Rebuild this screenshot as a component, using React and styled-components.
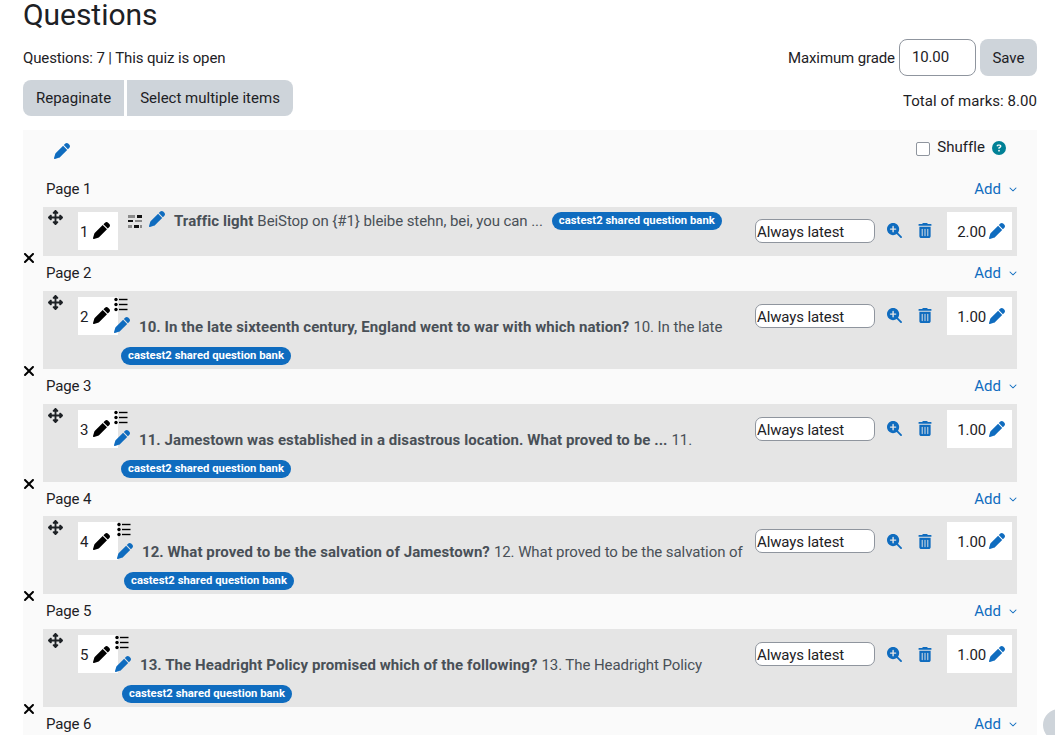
import React from 'react';
import styled, { createGlobalStyle } from 'styled-components';
import {
  FaPen,
  FaUpDownLeftRight,
  FaXmark,
  FaMagnifyingGlassPlus,
  FaTrashCan,
  FaChevronDown,
  FaCircleQuestion,
} from 'react-icons/fa6';

const GlobalStyle = createGlobalStyle`
  html, body {
    margin: 0;
    height: 735px;
    overflow: hidden;
    background: #fff;
    font-family: Roboto, 'Noto Sans', sans-serif;
    font-size: 15px;
    letter-spacing: -0.12px;
    color: #1d2125;
  }
`;

const Page = styled.div`
  padding: 0 18px 0 23px;
  height: 735px;
  overflow: hidden;
  box-sizing: border-box;
`;

const Heading = styled.h2`
  margin: 0;
  height: 39px;
  font-size: 30px;
  font-weight: 400;
  letter-spacing: -0.05px;
  line-height: 29px;
`;

const TopBar = styled.div`
  display: flex;
  justify-content: space-between;
  height: 77px;
`;

const Column = styled.div`
  display: flex;
  flex-direction: column;
  align-items: ${(p) => (p.$right ? 'flex-end' : 'flex-start')};
`;

const Stats = styled.div`
  height: 41px;
  line-height: 38px;
`;

const ButtonGroup = styled.div`
  display: flex;
  gap: 3px;
`;

const Button = styled.button`
  height: ${(p) => (p.$tall ? 37 : 36)}px;
  padding: 0 ${(p) => (p.$tall ? 12.5 : 13)}px;
  border: 0;
  border-radius: ${(p) => p.$radius || '8px'};
  background: #ced4da;
  color: #1d2125;
  font: inherit;
  letter-spacing: 0;
`;

const GradeForm = styled.div`
  display: flex;
  align-items: center;
  gap: 4px;
`;

const GradeInput = styled.div`
  width: 77px;
  height: 37px;
  box-sizing: border-box;
  padding-left: 12px;
  border: 1px solid #8f959e;
  border-radius: 8px;
  line-height: 35px;
`;

const Total = styled.div`
  margin-top: 14px;
  letter-spacing: 0.05px;
  line-height: 23px;
`;

const Panel = styled.div`
  margin-top: 14px;
  padding: 0 20px;
  background: #fafafa;
`;

const PanelHead = styled.div`
  display: flex;
  justify-content: space-between;
  height: 42px;
  padding: 0 11px;
`;

const HeadPen = styled.span`
  margin-top: 13px;
  color: #0f6cbf;
  font-size: 16px;
  line-height: 16px;
`;

const Shuffle = styled.label`
  display: flex;
  align-items: center;
  height: 34px;
  gap: 7px;
  letter-spacing: 0.05px;
`;

const Checkbox = styled.span`
  width: 14px;
  height: 14px;
  margin-top: 4px;
  background: #fff;
  border: 1px solid #8f959e;
  border-radius: 2px;
  box-sizing: border-box;
`;

const HelpIcon = styled.span`
  margin-top: 4px;
  color: #008196;
  font-size: 14px;
  line-height: 14px;
`;

const PageHead = styled.div`
  display: flex;
  align-items: center;
  justify-content: space-between;
  height: 34.7px;
  padding: 0 0 1px 3px;
  box-sizing: border-box;
`;

const AddLink = styled.span`
  display: flex;
  align-items: center;
  gap: 8px;
  color: #0f6cbf;
  letter-spacing: 0.05px;
  svg {
    font-size: 8px;
  }
`;

const Row = styled.div`
  position: relative;
  display: flex;
  height: ${(p) => (p.$single ? 49.6 : 78)}px;
  background: #e5e5e5;
  padding: ${(p) => (p.$single ? 5 : 6)}px 5px 0;
  box-sizing: border-box;
`;

const RemoveIcon = styled.span`
  position: absolute;
  left: -22px;
  bottom: -9px;
  display: flex;
  font-size: 16px;
  line-height: 14px;
  height: 14px;
  align-items: center;
  color: #000;
`;

const MoveIcon = styled.span`
  flex: none;
  width: 30px;
  margin-top: -2px;
  color: #1d2125;
  font-size: 15px;
  line-height: 15px;
`;

const NumberBox = styled.div`
  flex: none;
  display: flex;
  align-items: center;
  gap: 5px;
  width: 40px;
  height: 38px;
  padding-left: 2px;
  box-sizing: border-box;
  background: #fff;
  svg {
    color: #000;
    font-size: 17px;
  }
`;

const BoxValue = styled.span`
  margin-top: 2px;
`;

const Content = styled.div`
  flex: 1;
  min-width: 0;
  margin-left: ${(p) => p.$shift}px;
  color: #495057;
  letter-spacing: -0.08px;
`;

const TypeIcon = styled.span`
  display: block;
  height: 15px;
`;

const QuestionLine = styled.div`
  display: flex;
  align-items: center;
  height: 26px;
  margin-top: 2px;
  white-space: nowrap;
`;

const SingleLine = styled.div`
  display: flex;
  align-items: center;
  height: 18px;
  margin-left: 10px;
  white-space: nowrap;
  svg {
    flex: none;
  }
`;

const EditPen = styled.span`
  flex: none;
  margin: ${(p) => (p.$single ? '0 9px 0 7px' : '0 9px 0 0')};
  color: #0f6cbf;
  font-size: 16px;
  line-height: 16px;
`;

const Title = styled.strong`
  font-weight: 700;
  letter-spacing: 0.08px;
  margin-right: 4px;
`;

const Badge = styled.span`
  display: inline-block;
  flex: none;
  height: 18px;
  margin-left: ${(p) => p.$gap || 0}px;
  padding: 0 7px;
  border-radius: 9px;
  background: #0f6cbf;
  color: #fff;
  font-size: 11.25px;
  font-weight: 700;
  letter-spacing: 0.03px;
  line-height: 18px;
  white-space: nowrap;
`;

const BadgeLine = styled.div`
  display: flex;
  margin: 7px 0 0 7px;
`;

const Controls = styled.div`
  flex: none;
  display: flex;
  align-items: center;
  height: 38px;
`;

const VersionSelect = styled.div`
  width: 120px;
  height: 24px;
  box-sizing: border-box;
  border: 1px solid #8f959e;
  border-radius: 7px;
  background: #fff;
  line-height: 24px;
  padding-left: 1px;
`;

const ActionIcon = styled.span`
  display: flex;
  justify-content: center;
  width: ${(p) => p.$width}px;
  margin-left: ${(p) => p.$left}px;
  color: #0f6cbf;
  font-size: 15px;
`;

const MarkBox = styled.div`
  display: flex;
  align-items: center;
  justify-content: flex-end;
  gap: 3px;
  width: 65px;
  height: 38px;
  margin-left: 15px;
  padding-right: 7px;
  box-sizing: border-box;
  background: #fff;
  svg {
    color: #0f6cbf;
    font-size: 16px;
  }
`;

const HelpBubble = styled.div`
  position: fixed;
  left: 1043px;
  top: 709px;
  width: 32px;
  height: 32px;
  border-radius: 50%;
  background: #ced4da;
`;

const MultiAnswerIcon = () => (
  <svg width="14" height="15" viewBox="0 0 14 15">
    <rect x="0" y="2" width="7" height="3" fill="#8a8a8a" />
    <rect x="9" y="2" width="5" height="3" fill="#111" />
    <rect x="0" y="7" width="5" height="2" fill="#111" />
    <rect x="7" y="7" width="7" height="2" fill="#8a8a8a" />
    <rect x="0" y="12" width="4" height="3" fill="#8a8a8a" />
    <rect x="6" y="12" width="5" height="3" fill="#111" />
    <rect x="12" y="12" width="2" height="3" fill="#8a8a8a" />
  </svg>
);

const ListIcon = () => (
  <svg width="14" height="15" viewBox="0 0 14 15" fill="#000">
    <circle cx="2" cy="2.5" r="1.7" />
    <circle cx="2" cy="7.5" r="1.7" />
    <circle cx="2" cy="12.5" r="1.7" />
    <rect x="5" y="1.8" width="8.5" height="1.4" />
    <rect x="5" y="6.8" width="8.5" height="1.4" />
    <rect x="5" y="11.8" width="8.5" height="1.4" />
  </svg>
);

const bank = 'castest2 shared question bank';

const questions = [
  {
    page: 1,
    mark: '2.00',
    single: true,
    title: 'Traffic light',
    text: 'BeiStop on {#1} bleibe stehn, bei, you can ...',
  },
  {
    page: 2,
    mark: '1.00',
    shift: -4,
    title: '10. In the late sixteenth century, England went to war with which nation?',
    text: '10. In the late',
  },
  {
    page: 3,
    mark: '1.00',
    shift: -4,
    title: '11. Jamestown was established in a disastrous location. What proved to be ...',
    text: '11.',
  },
  {
    page: 4,
    mark: '1.00',
    shift: -1,
    title: '12. What proved to be the salvation of Jamestown?',
    text: '12. What proved to be the salvation of',
  },
  {
    page: 5,
    mark: '1.00',
    shift: -3,
    title: '13. The Headright Policy promised which of the following?',
    text: '13. The Headright Policy',
  },
];

const QuestionRow = ({ q }) => (
  <Row $single={q.single}>
    <MoveIcon><FaUpDownLeftRight /></MoveIcon>
    <NumberBox><BoxValue>{q.page}</BoxValue><FaPen /></NumberBox>
    {q.single ? (
      <Content $shift={0}>
        <SingleLine>
          <MultiAnswerIcon />
          <EditPen $single><FaPen /></EditPen>
          <Title>{q.title}</Title>
          {q.text}
          <Badge $gap={9}>{bank}</Badge>
        </SingleLine>
      </Content>
    ) : (
      <Content $shift={q.shift}>
        <TypeIcon><ListIcon /></TypeIcon>
        <QuestionLine>
          <EditPen><FaPen /></EditPen>
          <Title>{q.title}</Title>
          {q.text}
        </QuestionLine>
        <BadgeLine><Badge>{bank}</Badge></BadgeLine>
      </Content>
    )}
    <Controls>
      <VersionSelect>Always latest</VersionSelect>
      <ActionIcon $width={16} $left={11}><FaMagnifyingGlassPlus /></ActionIcon>
      <ActionIcon $width={14} $left={16}><FaTrashCan /></ActionIcon>
      <MarkBox><BoxValue>{q.mark}</BoxValue><FaPen /></MarkBox>
    </Controls>
    <RemoveIcon><FaXmark /></RemoveIcon>
  </Row>
);

const App = () => (
  <Page>
    <GlobalStyle />
    <Heading>Questions</Heading>
    <TopBar>
      <Column>
        <Stats>Questions: 7 | This quiz is open</Stats>
        <ButtonGroup>
          <Button $radius="8px 0 0 8px">Repaginate</Button>
          <Button $radius="0 8px 8px 0">Select multiple items</Button>
        </ButtonGroup>
      </Column>
      <Column $right>
        <GradeForm>
          Maximum grade
          <GradeInput>10.00</GradeInput>
          <Button $tall>Save</Button>
        </GradeForm>
        <Total>Total of marks: 8.00</Total>
      </Column>
    </TopBar>
    <Panel>
      <PanelHead>
        <HeadPen><FaPen /></HeadPen>
        <Shuffle>
          <Checkbox />
          Shuffle
          <HelpIcon><FaCircleQuestion /></HelpIcon>
        </Shuffle>
      </PanelHead>
      {questions.map((q) => (
        <React.Fragment key={q.page}>
          <PageHead>
            Page {q.page}
            <AddLink>Add <FaChevronDown /></AddLink>
          </PageHead>
          <QuestionRow q={q} />
        </React.Fragment>
      ))}
      <PageHead>
        Page 6
        <AddLink>Add <FaChevronDown /></AddLink>
      </PageHead>
    </Panel>
    <HelpBubble />
  </Page>
);

export default App;
